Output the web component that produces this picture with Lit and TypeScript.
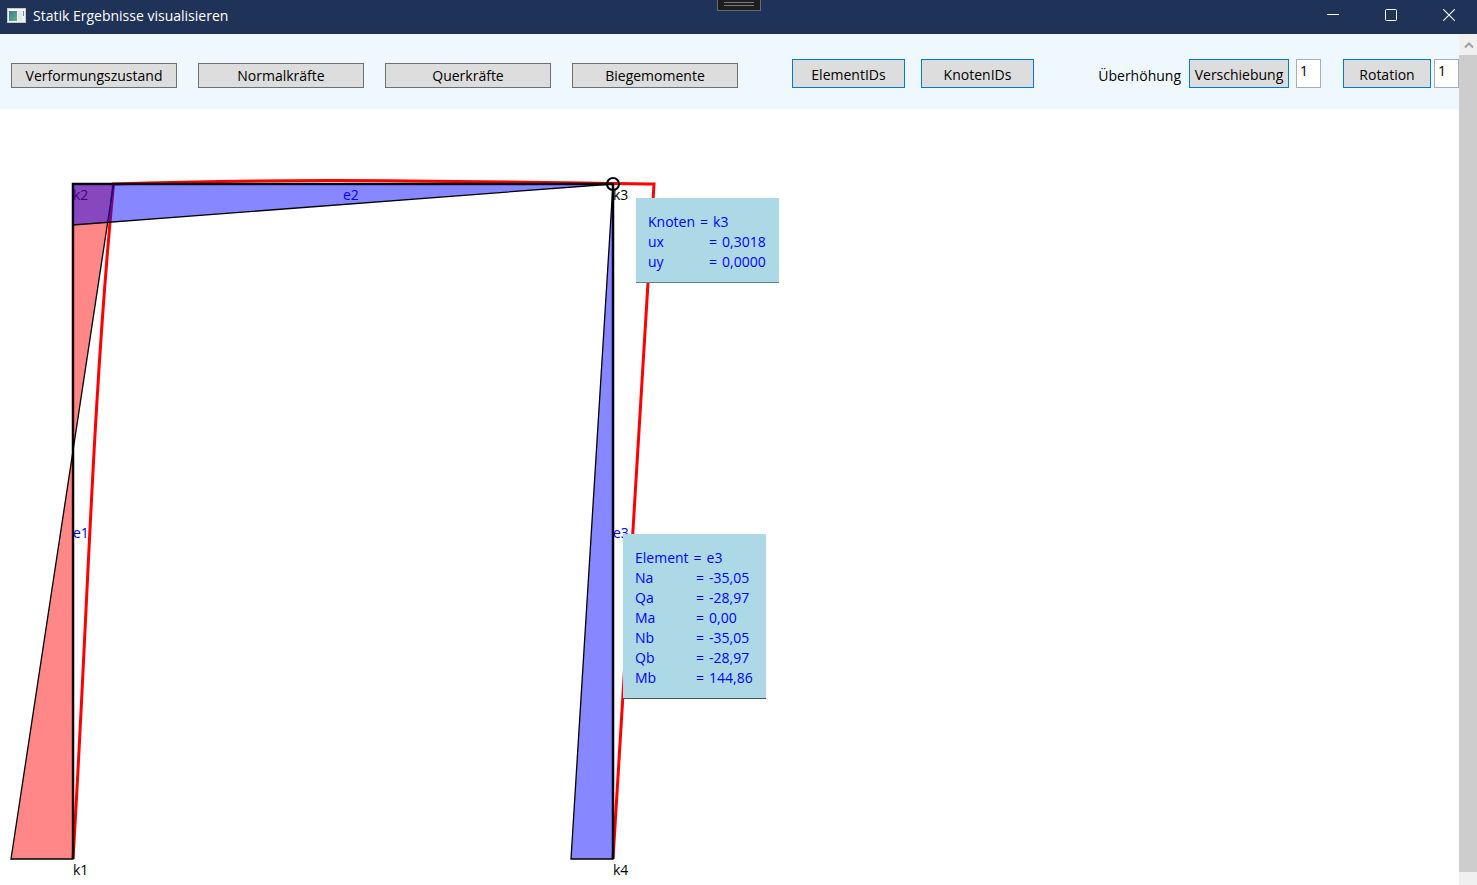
import { LitElement, html, svg, css } from "lit";
import { customElement, property } from "lit/decorators.js";

interface Label {
  id: string;
  x: number;
  y: number;
}

const NODES: Label[] = [
  { id: "k1", x: 73, y: 766 },
  { id: "k2", x: 73, y: 91 },
  { id: "k3", x: 613, y: 91 },
  { id: "k4", x: 613, y: 766 },
];

const ELEMENTS: Label[] = [
  { id: "e1", x: 73, y: 429 },
  { id: "e2", x: 343, y: 91 },
  { id: "e3", x: 613, y: 429 },
];

@customElement("title-bar")
export class TitleBar extends LitElement {
  @property() heading = "";

  static styles = css`
    :host {
      display: flex;
      align-items: flex-start;
      gap: 2px;
      position: relative;
      height: 34px;
      background: #1f3258;
      color: #fff;
    }
    .caption {
      display: flex;
      align-items: center;
      gap: 7px;
      height: 31px;
      padding-left: 7px;
      flex: 1;
      font-size: 14px;
      font-weight: 400;
      margin: 0;
    }
    .window-button {
      width: 56px;
      height: 30px;
      padding: 0;
      border: 0;
      background: none;
      color: inherit;
      display: grid;
      place-items: center;
    }
    .debug-handle {
      position: absolute;
      top: -1px;
      left: 50%;
      width: 44px;
      height: 12px;
      box-sizing: border-box;
      transform: translateX(-50%);
      background: #1e1e1e;
      border: 1px solid #6a6a6a;
    }
    .debug-handle svg {
      display: block;
      margin: 2px auto 0;
    }
  `;

  render() {
    return html`
      <h1 class="caption">
        <svg width="19" height="16" viewBox="0 0 19 16" aria-hidden="true">
          <defs>
            <linearGradient id="pane" x1="0" y1="0" x2="1" y2="1">
              <stop offset="0" stop-color="#3f78a0" />
              <stop offset="1" stop-color="#62b57c" />
            </linearGradient>
          </defs>
          <rect x="0.5" y="0.5" width="18" height="14" fill="#f2f2f2" stroke="#c6c9cc" />
          <rect x="1" y="1" width="17" height="2" fill="#fff" />
          <rect x="2" y="3" width="8" height="10" fill="url(#pane)" />
          <rect x="11" y="3" width="4" height="10" fill="#e4e8e8" />
          <rect x="16" y="3" width="1" height="5" fill="#5a9a8c" />
        </svg>
        ${this.heading}
      </h1>
      <div class="debug-handle">
        <svg width="30" height="4" viewBox="0 0 30 4" aria-hidden="true">
          <path d="M0 .5H30M0 3.5H30" stroke="#7a7a7a" />
        </svg>
      </div>
      <button class="window-button" aria-label="Minimieren">
        <svg width="12" height="12" viewBox="0 0 12 12"><path d="M0 5.5H12" stroke="#fff" /></svg>
      </button>
      <button class="window-button" aria-label="Maximieren">
        <svg width="12" height="12" viewBox="0 0 12 12">
          <rect x=".5" y=".5" width="11" height="11" rx="1" fill="none" stroke="#fff" />
        </svg>
      </button>
      <button class="window-button" aria-label="Schließen">
        <svg width="12" height="12" viewBox="0 0 12 12">
          <path d="M.3 .3L11.7 11.7M11.7 .3L.3 11.7" stroke="#fff" stroke-width="1.1" />
        </svg>
      </button>
    `;
  }
}

@customElement("result-toolbar")
export class ResultToolbar extends LitElement {
  static styles = css`
    :host {
      display: flex;
      align-items: flex-end;
      box-sizing: border-box;
      height: 75px;
      padding: 0 0 21px 11px;
      background: #f0f8ff;
    }
    .diagrams,
    .ids,
    .scaling {
      display: flex;
      align-items: flex-end;
    }
    .diagrams {
      gap: 21px;
    }
    .ids {
      gap: 16px;
      margin-left: 54px;
    }
    .scaling {
      margin-left: auto;
    }
    button,
    input {
      box-sizing: border-box;
      font: inherit;
      color: #000;
      border-radius: 0;
      white-space: nowrap;
    }
    button {
      padding: 0;
      background: #ddd;
      border: 1px solid #707070;
      width: 166px;
      height: 25px;
      line-height: 23px;
    }
    .default {
      border-color: #0078d7;
      width: 113px;
      height: 29px;
      padding-top: 2px;
      line-height: 25px;
    }
    .shift {
      width: 100px;
      margin: 0 7px 0 8px;
    }
    .rotation {
      width: 88px;
      margin: 0 3px 0 22px;
    }
    .title {
      line-height: 24px;
    }
    input {
      width: 25px;
      height: 29px;
      padding: 0 3px 6px;
      border: 1px solid #abadb3;
      background: #fff;
    }
  `;

  render() {
    return html`
      <div class="diagrams">
        <button>Verformungszustand</button>
        <button>Normalkräfte</button>
        <button>Querkräfte</button>
        <button>Biegemomente</button>
      </div>
      <div class="ids">
        <button class="default">ElementIDs</button>
        <button class="default">KnotenIDs</button>
      </div>
      <div class="scaling">
        <span class="title">Überhöhung</span>
        <button class="default shift" id="shift">Verschiebung</button>
        <input aria-labelledby="shift" value="1" />
        <button class="default rotation" id="rotation">Rotation</button>
        <input aria-labelledby="rotation" value="1" />
      </div>
    `;
  }
}

@customElement("result-popup")
export class ResultPopup extends LitElement {
  @property() kind = "";
  @property() name = "";
  @property({ attribute: false }) rows: [string, string][] = [];

  static styles = css`
    :host {
      display: block;
      box-sizing: border-box;
      width: 143px;
      padding: 14px 0 10px 12px;
      background: #add8e6;
      border-bottom: 1px solid #5f8190;
      color: #00f;
      line-height: 20px;
      white-space: nowrap;
    }
    .head,
    .value {
      display: flex;
      gap: 5px;
    }
    .row {
      display: grid;
      grid-template-columns: 61px auto;
      margin: 0;
    }
    dl,
    dd {
      margin: 0;
    }
  `;

  render() {
    return html`
      <div class="head"><span>${this.kind}</span><span>=</span><span>${this.name}</span></div>
      <dl>
        ${this.rows.map(
          ([key, value]) => html`
            <div class="row">
              <dt>${key}</dt>
              <dd class="value"><span>=</span><span>${value}</span></dd>
            </div>
          `
        )}
      </dl>
    `;
  }
}

@customElement("frame-canvas")
export class FrameCanvas extends LitElement {
  static styles = css`
    :host {
      display: block;
      position: relative;
      flex: 1;
      overflow: hidden;
      background: #fff;
    }
    .drawing {
      display: block;
      width: 100%;
      height: 100%;
    }
    .node {
      fill: #000;
    }
    .element {
      fill: #00f;
    }
    .member {
      fill: none;
      stroke: #000;
      stroke-width: 2.5;
    }
    .hinge {
      fill: none;
      stroke: #000;
      stroke-width: 2;
    }
    .deformed {
      fill: none;
      stroke: #f00;
      stroke-width: 3;
    }
    .positive,
    .negative {
      stroke: #000;
      stroke-width: 1.3;
    }
    .positive {
      fill: rgba(0, 0, 255, 0.47);
    }
    .negative {
      fill: rgba(255, 0, 0, 0.47);
    }
    .node-popup,
    .element-popup {
      position: absolute;
    }
    .node-popup {
      left: 636px;
      top: 89px;
    }
    .element-popup {
      left: 623px;
      top: 425px;
      border-bottom-color: #3c5560;
    }
  `;

  private label(item: Label, kind: string) {
    return svg`<text class=${kind} x=${item.x} y=${item.y}>${item.id}</text>`;
  }

  render() {
    return html`
      <svg class="drawing">
        ${NODES.map((n) => this.label(n, "node"))}
        ${ELEMENTS.map((e) => this.label(e, "element"))}
        <path class="deformed" d="M73 750C87 520 92 300 113.500 75C290 69 430 72 654 75L613 750" />
        <path class="member" d="M73 750V75H613V750" />
        <circle class="hinge" cx="613" cy="75" r="6" />
        <path class="negative" d="M73 750V75H113.500L11 750Z" />
        <path class="positive" d="M73 75H613L73 116Z" />
        <path class="positive" d="M613 75V750H571Z" />
      </svg>
      <result-popup
        class="node-popup"
        kind="Knoten"
        name="k3"
        .rows=${[["ux", "0,3018"], ["uy", "0,0000"]]}
      ></result-popup>
      <result-popup
        class="element-popup"
        kind="Element"
        name="e3"
        .rows=${[
          ["Na", "-35,05"],
          ["Qa", "-28,97"],
          ["Ma", "0,00"],
          ["Nb", "-35,05"],
          ["Qb", "-28,97"],
          ["Mb", "144,86"],
        ]}
      ></result-popup>
    `;
  }
}

@customElement("app-root")
export class AppRoot extends LitElement {
  static styles = css`
    :host {
      display: flex;
      flex-direction: column;
      height: 100vh;
      overflow: hidden;
      font: 14px/20px "Open Sans", "Noto Sans", sans-serif;
      color: #000;
    }
    .body {
      display: flex;
      flex: 1;
      min-height: 0;
    }
    .content {
      display: flex;
      flex-direction: column;
      flex: 1;
      min-width: 0;
    }
    .scrollbar {
      display: flex;
      flex-direction: column;
      width: 18px;
      padding-bottom: 13px;
      background: #f0f0f0;
    }
    .up {
      height: 21px;
      padding: 2px 0 0 2px;
      border: 0;
      background: none;
      display: grid;
      place-items: center;
    }
    .thumb {
      flex: 1;
      background: #cdcdcd;
    }
  `;

  render() {
    return html`
      <title-bar heading="Statik Ergebnisse visualisieren"></title-bar>
      <div class="body">
        <main class="content">
          <result-toolbar></result-toolbar>
          <frame-canvas></frame-canvas>
        </main>
        <div class="scrollbar">
          <button class="up" aria-label="Nach oben">
            <svg width="10" height="7" viewBox="0 0 10 7">
              <path d="M1 5.500L5 1.500L9 5.500" fill="none" stroke="#a0a0a0" stroke-width="2" />
            </svg>
          </button>
          <div class="thumb"></div>
        </div>
      </div>
    `;
  }
}
